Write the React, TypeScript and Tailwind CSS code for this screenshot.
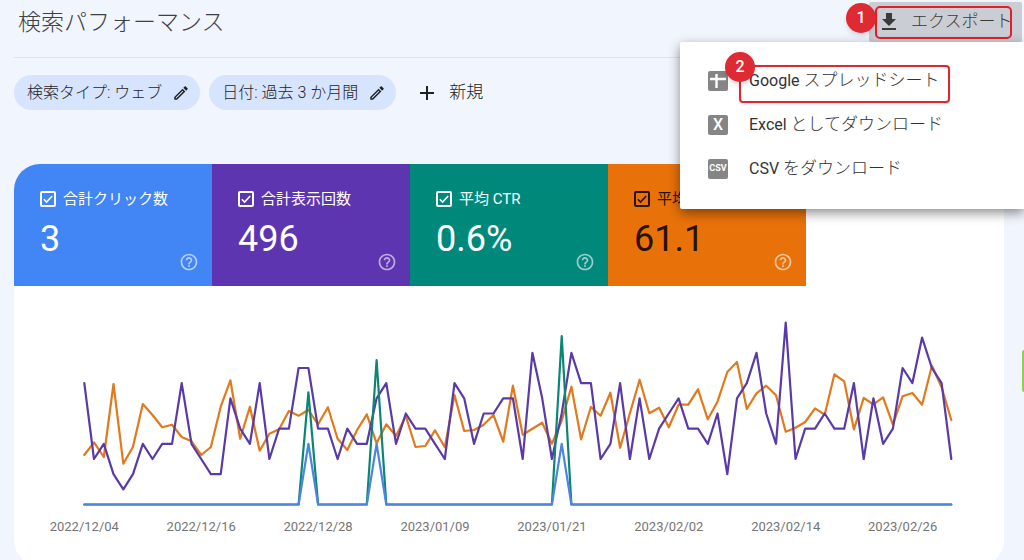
import React from "react";
import { MdAdd, MdGetApp, MdHelpOutline, MdOutlineEdit } from "react-icons/md";

const impressions = [
  8, 3, 4, 2, 1, 2, 4, 3, 4, 4, 8, 4, 3, 2, 2, 7, 5, 4, 8, 3, 5, 5, 9, 9, 5, 5, 3, 5, 4, 4,
  7, 8, 4, 6, 5, 5, 4, 3, 8, 7, 4, 6, 6, 7, 7, 3, 10, 7, 3, 6, 10, 8, 8, 3, 4, 8, 3, 7, 3, 5,
  6, 7, 5, 5, 4, 6, 2, 7, 8, 10, 6, 4, 12, 3, 5, 5, 6, 5, 5, 8, 3, 7, 4, 5, 9, 8, 11, 9, 8, 3,
];

// Average position, measured in thirds of a unit down from the top of the plot.
const position = [
  435, 397, 441, 222, 461, 410, 282, 315, 352, 344, 381, 394, 435, 411, 290, 211, 386, 290, 422, 371,
  358, 303, 317, 300, 343, 292, 386, 420, 360, 313, 400, 343, 378, 318, 411, 408, 361, 412, 255, 363,
  360, 344, 315, 395, 227, 374, 356, 338, 401, 332, 230, 388, 291, 317, 248, 413, 310, 209, 310, 293,
  352, 284, 284, 238, 328, 275, 186, 156, 297, 250, 227, 256, 365, 353, 336, 295, 314, 193, 214, 358,
  264, 283, 262, 344, 259, 249, 284, 167, 232, 330,
];

const clickDays = [23, 30, 49];
const clicks = impressions.map((_, i) => (clickDays.includes(i) ? 1 : 0));

const BASE = 218.5;
const STEP = 9.742;
const LEFT = 70.3;

const toPoints = (ys: number[]) =>
  ys.map((y, i) => `${(LEFT + i * STEP).toFixed(1)},${y.toFixed(1)}`).join(" ");

const series = [
  { color: "#e07a1c", points: toPoints(position.map((p) => p / 3 + 24)) },
  { color: "#5a3aa8", points: toPoints(impressions.map((v) => BASE - v * 15.17)) },
  { color: "#0b8574", points: toPoints(clicks.map((c, i) => BASE - (c / impressions[i]) * 1010)) },
  { color: "#4a86e0", points: toPoints(clicks.map((c) => BASE - c * 60.6)) },
];

const dates = [
  "2022/12/04", "2022/12/16", "2022/12/28", "2023/01/09",
  "2023/01/21", "2023/02/02", "2023/02/14", "2023/02/26",
];

const metrics = [
  { label: "合計クリック数", value: "3", tone: "bg-[#4285f4] text-white" },
  { label: "合計表示回数", value: "496", tone: "bg-[#5e35b1] text-white" },
  { label: "平均 CTR", value: "0.6%", tone: "bg-[#00897b] text-white" },
  { label: "平均掲載順位", value: "61.1", tone: "bg-[#e8710a] text-[#2a1204]" },
];

function Metric({ label, value, tone }: { label: string; value: string; tone: string }) {
  return (
    <div className={`relative h-[122px] w-1/5 min-w-[198px] pl-[26px] pt-[24px] ${tone}`}>
      <label className="flex items-center gap-[7px] text-[15px] leading-[22px]">
        <span className="relative flex size-[16px] shrink-0">
          <input
            type="checkbox"
            defaultChecked
            className="size-[16px] appearance-none rounded-[2px] border-2 border-current"
          />
          <svg viewBox="0 0 16 16" className="pointer-events-none absolute inset-0 size-[16px]" fill="none" stroke="currentColor" strokeWidth="1.6">
            <path d="M3.800 8.200l2.800 2.800 5.600-6" />
          </svg>
        </span>
        <span className="whitespace-nowrap">{label}</span>
      </label>
      <div className="mt-[9px] text-[36px] leading-[40px]">{value}</div>
      <button type="button" aria-label={`${label}のヘルプ`} className="absolute bottom-[14px] right-[13px] text-white/60">
        <MdHelpOutline className="size-[20px]" />
      </button>
    </div>
  );
}

function Chip({ children }: { children: React.ReactNode }) {
  return (
    <button
      type="button"
      className="flex h-[35px] items-center gap-[10px] whitespace-nowrap rounded-full bg-[#d6e4fd] pl-[13px] pr-[10px] text-[16px] font-light text-[#1f2328]"
    >
      <span>{children}</span>
      <MdOutlineEdit className="size-[18px]" />
    </button>
  );
}

function Badge({ n, place }: { n: number; place: string }) {
  return (
    <span
      className={`absolute flex size-[30px] items-center justify-center rounded-full bg-[#dd2a33] text-[16px] font-medium text-white shadow-md ${place}`}
    >
      {n}
    </span>
  );
}

const tile = "flex size-[20px] shrink-0 items-center justify-center rounded-[2px] bg-[#858585] text-white";

type MenuItemProps = { icon: React.ReactNode; latin: string; kana: string; mark?: React.ReactNode };

function MenuItem({ icon, latin, kana, mark }: MenuItemProps) {
  return (
    <li className="relative">
      <button type="button" role="menuitem" className="flex h-[44px] w-full items-center gap-[21px] pl-[28px] text-left text-[16px] text-[#333]">
        {icon}
        <span className="whitespace-nowrap">
          {latin} <span className="text-[17px] font-light">{kana}</span>
        </span>
      </button>
      {mark}
    </li>
  );
}

export default function App() {
  return (
    <div className="relative h-screen overflow-hidden bg-[#f1f5fd] font-[Roboto,'Noto_Sans_CJK_JP',sans-serif] text-[#202124]">
      <header className="ml-[14px] flex h-[58px] items-start justify-between border-b border-[#dfe2e8] pl-[4px]">
        <h1 className="pt-[6px] text-[23px] font-light leading-[34px] text-[#3c3f43]">検索パフォーマンス</h1>
        <div className="relative z-10 pr-[2px] pt-[2px]">
          <button type="button" aria-haspopup="menu" className="flex h-[40px] w-[153px] items-center gap-[10px] rounded-[2px] bg-[#cacdd4] pl-[8px] text-[17px] font-light text-[#3a3a3a]">
            <MdGetApp className="size-[24px] shrink-0" />
            <span className="whitespace-nowrap">エクスポート</span>
          </button>
          <span className="pointer-events-none absolute left-[6px] top-[6px] h-[33px] w-[137px] rounded-[5px] border-2 border-[#e0202a]" />
          <ul role="menu" className="absolute right-0 top-full h-[167px] w-[344px] rounded-l-[2px] bg-white pt-[17px] shadow-[0_4px_12px_rgba(0,0,0,0.45)]">
            <MenuItem
              icon={
                <svg viewBox="0 0 20 20" className="size-[20px] shrink-0">
                  <rect width="20" height="20" rx="2" fill="#858585" />
                  <path d="M2 8h16M8.500 3v14" stroke="#fff" strokeWidth="2.400" />
                </svg>
              }
              latin="Google"
              kana="スプレッドシート"
              mark={
                <>
                  <span className="pointer-events-none absolute left-[59px] top-[6px] h-[38px] w-[211px] rounded-[4px] border-2 border-[#dc2832] shadow-sm" />
                  <Badge n={2} place="left-[45px] -top-[7px]" />
                </>
              }
            />
            <MenuItem icon={<span className={`${tile} text-[16px] font-medium`}>X</span>} latin="Excel" kana="としてダウンロード" />
            <MenuItem icon={<span className={`${tile} text-[9px] font-bold`}>CSV</span>} latin="CSV" kana="をダウンロード" />
          </ul>
          <Badge n={1} place="-left-[23px] top-[3px]" />
        </div>
      </header>

      <div className="flex items-center gap-[9px] pl-[14px] pt-[17px]">
        <Chip>検索タイプ: ウェブ</Chip>
        <Chip>日付: 過去 3 か月間</Chip>
        <button type="button" className="ml-[10px] flex items-center gap-[10px] text-[17px] font-light">
          <MdAdd className="size-[24px]" />
          新規
        </button>
      </div>

      <main className="ml-[14px] mr-[20px] mt-[54px] overflow-hidden rounded-[26px] bg-white">
        <div className="flex">
          {metrics.map((m) => (
            <Metric key={m.label} {...m} />
          ))}
        </div>
        <svg viewBox="0 0 990 280" className="block w-full" role="img" aria-label="検索パフォーマンスの推移">
          {series.map((s) => (
            <polyline key={s.color} points={s.points} fill="none" stroke={s.color} strokeWidth="2.200" strokeLinejoin="round" strokeLinecap="round" />
          ))}
          {dates.map((d, i) => (
            <text key={d} x={LEFT + i * STEP * 12} y="245" textAnchor="middle" className="fill-[#757575] text-[13px]">
              {d}
            </text>
          ))}
        </svg>
      </main>
      <div className="absolute right-0 top-[350px] h-[42px] w-[2px] rounded-l-[2px] bg-[#8fcf4f]" />
    </div>
  );
}
